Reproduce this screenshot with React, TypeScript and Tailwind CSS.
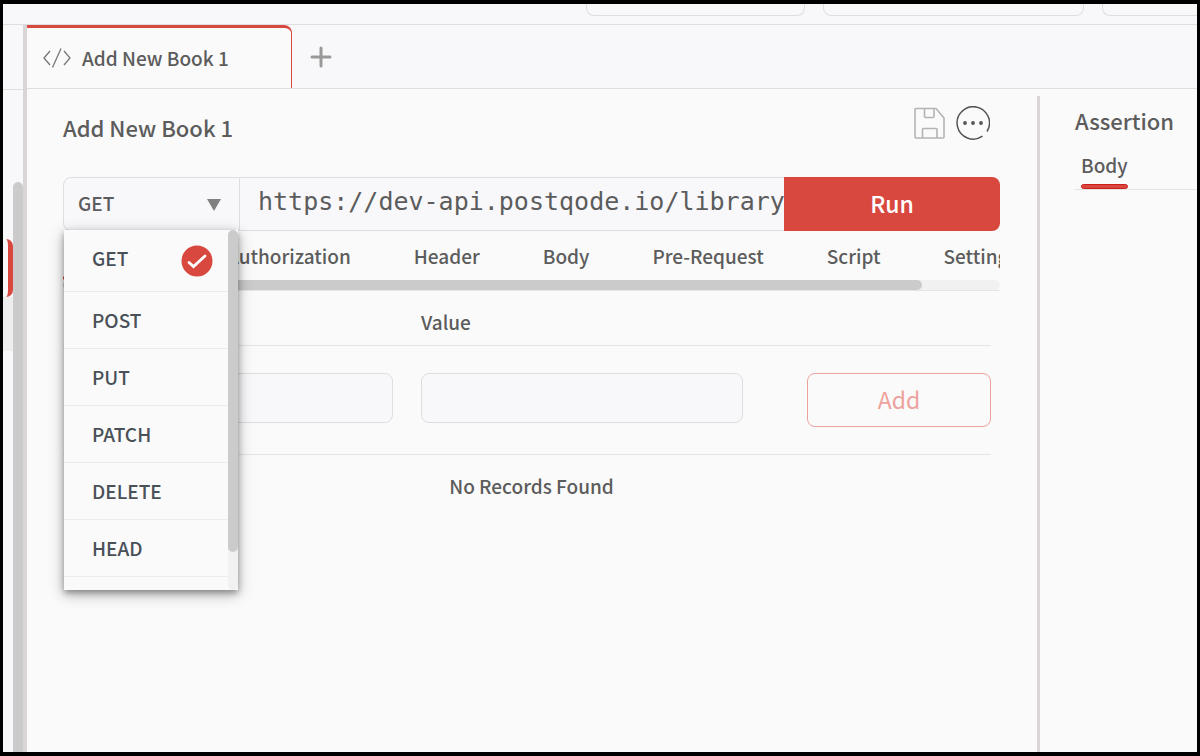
import { useState } from "react";

const methods = ["GET", "POST", "PUT", "PATCH", "DELETE", "HEAD"];
const requestTabs = ["Authorization", "Header", "Body", "Pre-Request", "Script", "Settings"];

function CodeIcon() {
  return (
    <svg width="28" height="20" viewBox="0 0 28 20" fill="none" stroke="#777" strokeWidth="1.3" aria-hidden="true">
      <path d="M7 3 1 10l6 7M18 0.5 9.5 19.5M21 3l6 7-6 7" />
    </svg>
  );
}

function PlusIcon() {
  return (
    <svg width="22" height="22" viewBox="0 0 22 22" stroke="#999" strokeWidth="3" strokeLinecap="round" aria-hidden="true">
      <path d="M11 2v18M2 11h18" />
    </svg>
  );
}

function SaveIcon() {
  return (
    <svg width="32" height="32" viewBox="0 0 32 32" fill="none" stroke="#b4b4b4" strokeWidth="1.6" strokeLinejoin="round" aria-hidden="true">
      <path d="M2 1.500h20l8 9.500V30a1 1 0 0 1-1 1H2a1 1 0 0 1-1-1V2.500a1 1 0 0 1 1-1z" />
      <path d="M10.500 1.500v8a1 1 0 0 0 1 1h7.500a1 1 0 0 0 1-1v-8" />
      <path d="M8.500 31v-8.500a1 1 0 0 1 1-1h12.500a1 1 0 0 1 1 1V31" />
    </svg>
  );
}

function MoreIcon() {
  return (
    <svg width="34" height="34" viewBox="0 0 34 34" fill="none" stroke="#555" strokeWidth="1.5" aria-hidden="true">
      <path d="M26.500 30.200A16.200 16.200 0 1 1 31 25.500" />
      <g fill="#555" stroke="none">
        <circle cx="9" cy="17" r="1.900" />
        <circle cx="17" cy="17" r="1.900" />
        <circle cx="25" cy="17" r="1.900" />
      </g>
    </svg>
  );
}

function CheckIcon() {
  return (
    <svg width="32" height="32" viewBox="0 0 32 32" fill="none" aria-hidden="true">
      <circle cx="16" cy="16" r="15.500" fill="#d8483f" />
      <path d="M8 17.500 12.500 21.500 24 11" stroke="#fff" strokeWidth="2.800" strokeLinecap="round" />
    </svg>
  );
}

function TopBar() {
  return (
    <header className="flex h-[21px] items-start justify-end gap-[18px] border-b border-[#dedede]">
      <div className="h-3 w-[219px] rounded-b-lg border border-t-0 border-[#dedede]" />
      <div className="h-3 w-[261px] rounded-b-lg border border-t-0 border-[#dedede]" />
      <div className="h-3 w-[95px] rounded-bl-lg border-b border-l border-[#dedede]" />
    </header>
  );
}

function Sidebar() {
  return (
    <aside className="flex w-6 shrink-0 border-r-4 border-[#d9d5d4]">
      <div className="w-[10px]">
        <div className="h-[65px] border-b border-[#dedede]" />
        <div className="h-[149px]" />
        <div className="ml-[3px] h-[58px] rounded-r-lg border-r-[5px] border-[#d8483f]" />
        <div className="h-[54px] bg-[#eee]" />
      </div>
      <div className="flex w-[10px] flex-col">
        <div className="h-[65px] border-b border-[#dedede]" />
        <div className="mt-[92px] grow rounded-t-full bg-[#cbcbcb]" />
      </div>
    </aside>
  );
}

function MethodMenu({ method, onSelect }: { method: string; onSelect: (m: string) => void }) {
  return (
    <div className="absolute top-[53px] left-px z-10 flex h-[360px] w-[174px] overflow-hidden bg-[#fafafa] shadow-[0_4px_14px_rgba(0,0,0,0.3),0_3px_6px_rgba(0,0,0,0.3)]">
      <ul className="grow">
        {methods.map((m) => (
          <li key={m} className="border-b border-[#ececec]">
            <button
              type="button"
              onClick={() => onSelect(m)}
              className="flex w-full items-start justify-between py-[14px] pr-[15px] pl-7 leading-7 text-[#495057]"
            >
              {m}
              {m === method && (
                <span className="pt-px">
                  <CheckIcon />
                </span>
              )}
            </button>
          </li>
        ))}
      </ul>
      <div className="w-[10px] rounded-full bg-[#f1f1f1]">
        <div className="h-[322px] rounded-full bg-[#cbcbcb]" />
      </div>
    </div>
  );
}

function RequestBar() {
  const [method, setMethod] = useState("GET");
  const [url, setUrl] = useState("https://dev-api.postqode.io/library");

  return (
    <div className="relative flex h-[54px]">
      <div className="relative w-[177px] shrink-0">
        <select
          aria-label="Method"
          value={method}
          onChange={(e) => setMethod(e.target.value)}
          className="h-full w-full appearance-none rounded-l-lg border border-[#dedede] bg-[#f8f8fb] px-[14px] pb-[2px]"
        >
          {methods.map((m) => (
            <option key={m}>{m}</option>
          ))}
        </select>
        <svg className="pointer-events-none absolute top-[22px] right-[19px]" width="14" height="12" viewBox="0 0 14 12" fill="#808080" aria-hidden="true">
          <path d="M0 0h14L7 12z" />
        </svg>
      </div>
      <input
        aria-label="Request URL"
        value={url}
        onChange={(e) => setUrl(e.target.value)}
        className="min-w-0 grow border-y border-[#dedede] bg-[#f8f8fb] pb-1 pl-[18px] font-['DejaVu_Sans_Mono',monospace] text-[25px] font-normal"
      />
      <button type="button" className="w-[216px] shrink-0 rounded-r-lg bg-[#d8483f] pb-[2px] text-[23px] text-white">
        Run
      </button>
      <MethodMenu method={method} onSelect={setMethod} />
    </div>
  );
}

function RequestTabs() {
  return (
    <div className="overflow-hidden border-b border-[#e4e4e4]">
      <nav className="flex h-[49px] items-start gap-[63px] pt-[11px] leading-7" aria-label="Request sections">
        <span className="mt-[34px] h-1 w-[101px] shrink-0 rounded-full bg-[#d8201a]" />
        {requestTabs.map((tab) => (
          <button key={tab} type="button" className="shrink-0">
            {tab}
          </button>
        ))}
      </nav>
      <div className="h-[10px] rounded-full bg-[#f1f1f1]">
        <div className="h-full w-[859px] rounded-full bg-[#cbcbcb]" />
      </div>
    </div>
  );
}

function ParamsTable() {
  return (
    <table className="mr-[9px] w-[calc(100%-9px)] table-fixed border-collapse text-left">
      <thead>
        <tr className="h-[54px] border-b border-[#e4e4e4]">
          <th className="w-[358px]" />
          <th className="pt-2 font-medium">Value</th>
          <th className="w-[184px]" />
        </tr>
      </thead>
      <tbody>
        <tr className="h-[109px] border-b border-[#e4e4e4] align-top">
          <td className="pt-[27px] pr-7 pl-2">
            <input aria-label="Key" className="h-[50px] w-full rounded-lg border border-[#dedede] bg-[#f8f8fb] px-3" />
          </td>
          <td className="pt-[27px] pr-16">
            <input aria-label="Value" className="h-[50px] w-full rounded-lg border border-[#dedede] bg-[#f8f8fb] px-3" />
          </td>
          <td className="pt-[27px]">
            <button type="button" className="h-[54px] w-full rounded-lg border border-[#eea29d] text-[23px] font-normal text-[#eea29d]">
              Add
            </button>
          </td>
        </tr>
      </tbody>
    </table>
  );
}

export default function App() {
  return (
    <div className="flex min-h-screen flex-col border-x-[3px] border-y-4 border-black bg-[#f8f8fb] font-['Noto_Sans_CJK_SC',sans-serif] text-[19px] font-medium text-[#5c5c5c]">
      <TopBar />
      <div className="flex grow">
        <Sidebar />
        <div className="flex min-w-0 grow flex-col">
          <div className="flex h-16 border-b border-[#dedede]">
            <div className="flex w-[265px] items-center gap-[11px] rounded-tr-lg border-t-[3px] border-r border-[#d8483f] bg-[#fafafa] pl-4">
              <CodeIcon />
              Add New Book 1
            </div>
            <button type="button" aria-label="New tab" className="px-[18px]">
              <PlusIcon />
            </button>
          </div>
          <div className="flex grow bg-[#fafafa]">
            <main className="min-w-0 grow pr-[37px] pl-9">
              <div className="flex h-[88px] items-center justify-between pb-3">
                <h1 className="text-[22px] leading-8 font-medium">Add New Book 1</h1>
                <div className="flex items-center gap-[10px] pr-[10px] pb-2">
                  <button type="button" aria-label="Save">
                    <SaveIcon />
                  </button>
                  <button type="button" aria-label="More options">
                    <MoreIcon />
                  </button>
                </div>
              </div>
              <RequestBar />
              <RequestTabs />
              <ParamsTable />
              <p className="pt-[17px] text-center leading-7">No Records Found</p>
            </main>
            <section className="mt-[7px] w-40 shrink-0 border-l-[3px] border-[#d9d5d4] pl-[35px]">
              <h2 className="pt-[6px] text-[22px] leading-9 font-medium">Assertion</h2>
              <div className="mt-[11px] border-b border-[#e4e4e4] px-[6px]">
                <button type="button" className="flex flex-col leading-8">
                  Body
                  <span className="mt-[3px] h-[5px] w-full rounded-full border border-[#cc1f1a] bg-[#d8483f]" />
                </button>
              </div>
            </section>
          </div>
        </div>
      </div>
    </div>
  );
}
